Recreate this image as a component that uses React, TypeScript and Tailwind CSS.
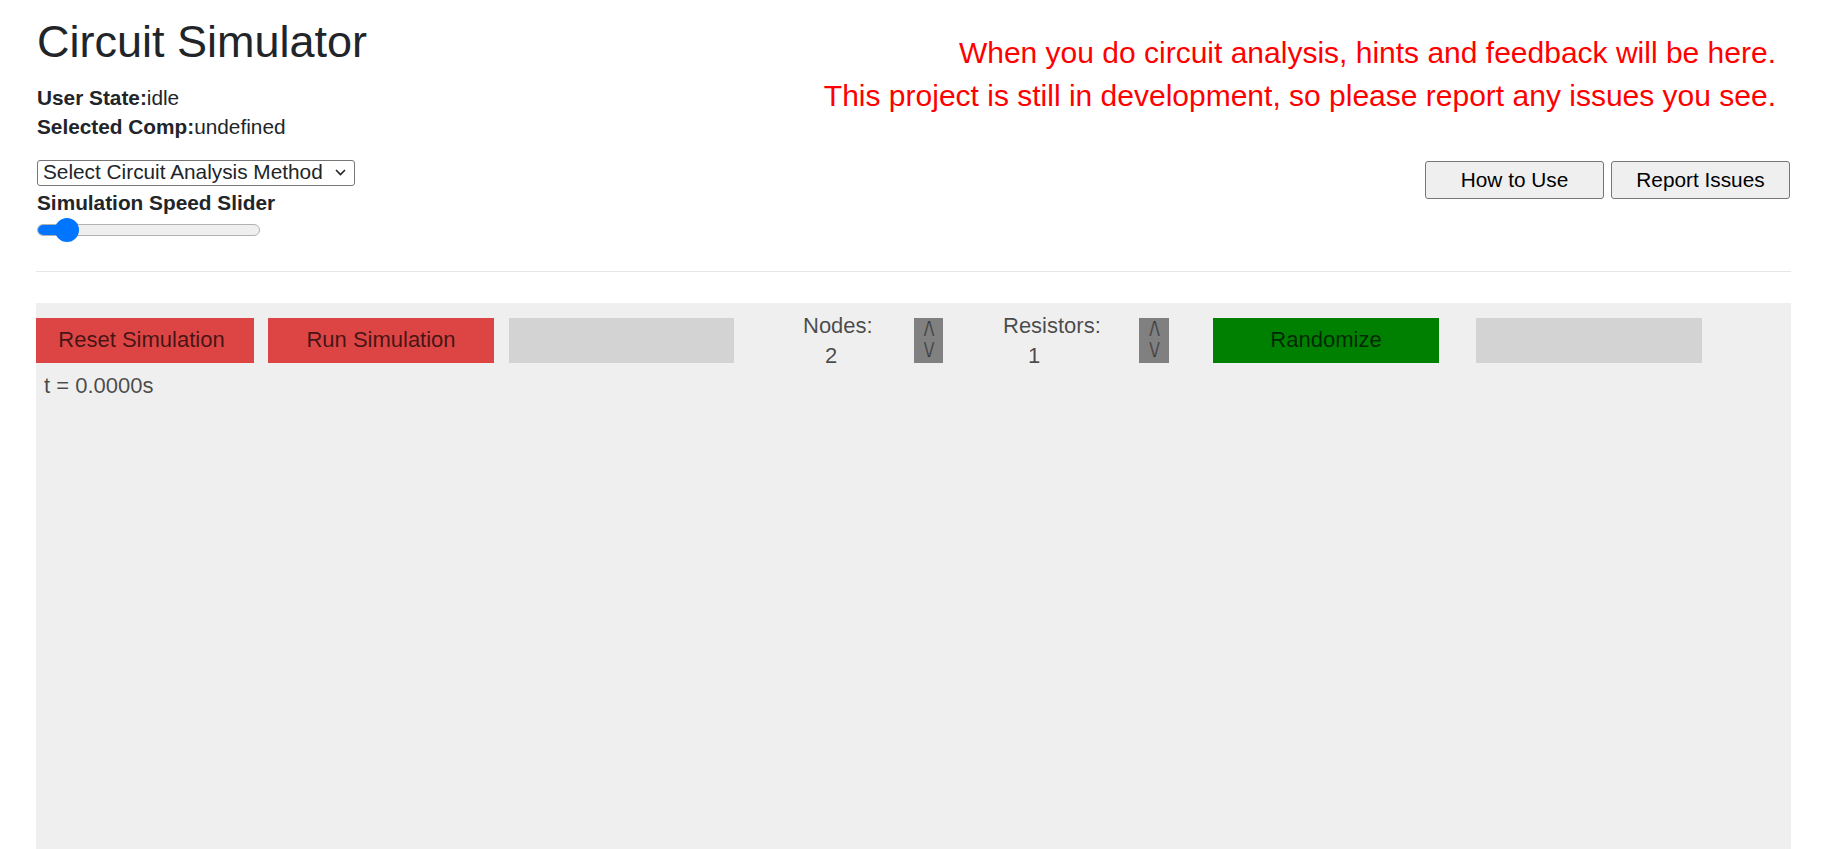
import React from "react";

function ArrowBox({ w }: { w: string }) {
  return (
    <div
      className={`${w} h-[45px] bg-[#808080] flex flex-col items-center justify-center pb-[2px] text-[21px] leading-[21px] tracking-[-1px] text-black/45`}
    >
      <span>/\</span>
      <span>\/</span>
    </div>
  );
}

export default function App() {
  return (
    <div className="min-h-screen bg-white font-['Liberation_Sans',Arial,sans-serif] text-[#212529]">
      <div className="ml-[36px] w-[1755px]">
        <div className="flex justify-between">
          <div className="flex flex-col pl-[1px]">
            <h1 className="mt-[15px] text-[45px] leading-[54px] font-normal">Circuit Simulator</h1>
            <div className="mt-[14px] text-[20.8px] leading-[29.3px]">
              <div>
                <span className="font-bold">User State:</span>idle
              </div>
              <div>
                <span className="font-bold">Selected Comp:</span>undefined
              </div>
            </div>
            <div className="mt-[18px] w-[318px] h-[26px] border border-[#767676] rounded-[3px] bg-white flex items-center justify-between pl-[5px] pr-[8px] text-[20.8px] leading-none">
              <span>Select Circuit Analysis Method</span>
              <svg width="11" height="7" viewBox="0 0 11 7" fill="none">
                <polyline points="1,1 5.5,5.5 10,1" stroke="#222" strokeWidth="1.6" />
              </svg>
            </div>
            <div className="mt-[5px] text-[20.8px] leading-[24px] font-bold">Simulation Speed Slider</div>
            <div className="mt-[3px] relative w-[223px] h-[24px] flex items-center">
              <div className="w-full h-[12px] rounded-full bg-[#efefef] border border-[#b2b2b2] overflow-hidden flex">
                <div className="w-[31px] h-full bg-[#0075ff]" />
              </div>
              <div className="absolute left-[18px] top-0 w-[24px] h-[24px] rounded-full bg-[#0075ff]" />
            </div>
          </div>
          <div className="flex flex-col items-end">
            <div className="mt-[31px] pr-[15px] text-right text-[30px] leading-[43px] text-[#ff0000]">
              <div>When you do circuit analysis, hints and feedback will be here.</div>
              <div>This project is still in development, so please report any issues you see.</div>
            </div>
            <div className="mt-[44px] flex gap-[7px] pr-[1px]">
              <button className="w-[179px] h-[38px] border border-[#767676] rounded-[3px] bg-[#efefef] text-[20.8px] text-black">
                How to Use
              </button>
              <button className="w-[179px] h-[38px] border border-[#767676] rounded-[3px] bg-[#efefef] text-[20.8px] text-black">
                Report Issues
              </button>
            </div>
          </div>
        </div>

        <div className="mt-[29px] h-px bg-[#e6e6e6]" />

        <div className="mt-[31px] h-[560px] bg-[#efefef] overflow-hidden text-[22px] leading-[30px] text-black/70">
          <div className="flex items-start pt-[15px]">
            <div className="w-[218px] h-[45px] bg-[#dd4545] flex items-center justify-center pr-[7px]">
              Reset Simulation
            </div>
            <div className="ml-[14px] w-[226px] h-[45px] bg-[#dd4545] flex items-center justify-center">
              Run Simulation
            </div>
            <div className="ml-[15px] w-[225px] h-[45px] bg-[#d3d3d3]" />
            <div className="ml-[69px] -mt-[7px] w-[111px]">
              <div>Nodes:</div>
              <div className="pl-[22px]">2</div>
            </div>
            <ArrowBox w="w-[29px]" />
            <div className="ml-[60px] -mt-[7px] w-[136px]">
              <div>Resistors:</div>
              <div className="pl-[25px]">1</div>
            </div>
            <ArrowBox w="w-[30px]" />
            <div className="ml-[44px] w-[226px] h-[45px] bg-[#008000] flex items-center justify-center">
              Randomize
            </div>
            <div className="ml-[37px] w-[226px] h-[45px] bg-[#d3d3d3]" />
          </div>
          <div className="mt-0 pl-[8px]">t = 0.0000s</div>
        </div>
      </div>
    </div>
  );
}
